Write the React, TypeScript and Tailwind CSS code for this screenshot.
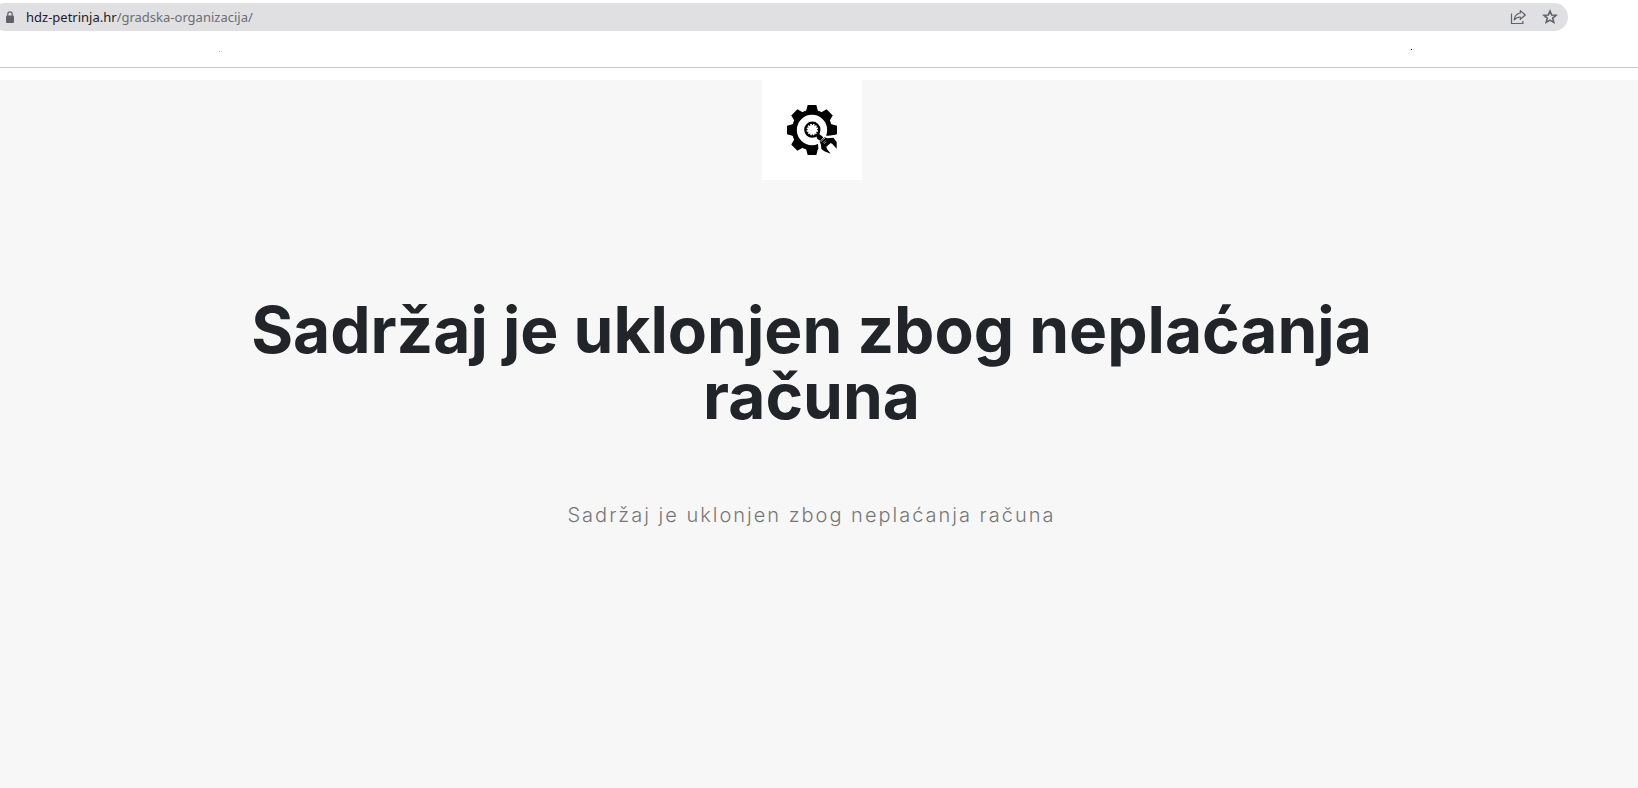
import React from 'react';

const LockIcon: React.FC = () => (
  <svg viewBox="0 0 10 13" className="h-[13px] w-[10px] shrink-0" aria-hidden="true">
    <rect x="1" y="4.5" width="8" height="7.5" rx="1" fill="#5f6368" />
    <path d="M2.8 5V3a2.2 2.2 0 0 1 4.4 0v2" fill="none" stroke="#5f6368" strokeWidth="1.2" />
  </svg>
);

const ShareIcon: React.FC = () => (
  <svg viewBox="0 0 16 16" className="size-4" fill="none" stroke="#5f6368" strokeWidth="1.2" aria-hidden="true">
    <path d="M1.5 4.5V14.5H12.9V12" />
    <path d="M10.3 1.6L15.3 6L10.3 10.3V8C7.7 8 5.9 8.7 4.2 10.8C4.7 7 6.8 4.5 10.3 4Z" strokeLinejoin="round" />
  </svg>
);

const StarIcon: React.FC = () => (
  <svg viewBox="0 0 16 16" className="size-4" aria-hidden="true">
    <path
      d="M8 2L9.7 6L14 6.3L10.7 9.1L11.8 13.4L8 11.1L4.2 13.4L5.3 9.1L2 6.3L6.3 6Z"
      fill="none"
      stroke="#5f6368"
      strokeWidth="1.6"
    />
  </svg>
);

const teeth = [0, 45, 90, 135, 180, 225, 270, 315];
const notches = [0, 30, 60, 90, 120, 150, 180, 210, 240, 270, 300, 330];

const GearLogo: React.FC = () => (
  <svg viewBox="0 0 150 150" className="size-[50px]" role="img" aria-label="Maintenance">
    <circle cx="75" cy="75" r="53" fill="none" stroke="#000" strokeWidth="15" />
    {teeth.map(angle => (
      <path key={angle} d="M62 0H88L93 19L98 24H52L57 19Z" transform={`rotate(${angle} 75 75)`} />
    ))}
    {/* Clear the lower right corner for the wrench */}
    <path d="M91 102L104 91L123 92L150 89V150H96L93 118Z" fill="#fff" />
    {/* Magnifying glass */}
    <circle cx="76" cy="74" r="21" fill="none" stroke="#000" strokeWidth="7" />
    {notches.map(angle => (
      <path key={angle} d="M76 54V60" stroke="#000" strokeWidth="3" transform={`rotate(${angle} 76 74)`} />
    ))}
    <path d="M88 94L96 86L109 97L100 107L91 102Z" />
    {/* Wrench */}
    <path d="M98 109L113 97L122 100L139 98L149 111V131L136 117L131 114L118 125L120 132L131 146L112 139L103 132L102 120Z" />
    <path d="M100 111L115 98" stroke="#fff" strokeWidth="2" />
    <path d="M108 113L115 107M111 116L118 110" stroke="#fff" strokeWidth="1.5" />
  </svg>
);

const BrowserBar: React.FC = () => (
  <header className="border-b border-[#c8c9cb] bg-white pt-[3px]">
    <div className="-ml-2 mr-[70px] flex h-7 items-center rounded-full bg-[#e0e0e2] pl-[13px] pr-2.5">
      <LockIcon />
      <a
        href="#"
        className="ml-[11px] font-['Noto_Sans',sans-serif] text-[13px] leading-5 text-[#6b6e72]"
      >
        <span className="text-[#202124]">hdz-petrinja.hr</span>/gradska-organizacija/
      </a>
      <div className="ml-auto flex items-center gap-4">
        <button type="button" aria-label="Share this page">
          <ShareIcon />
        </button>
        <button type="button" aria-label="Bookmark this page">
          <StarIcon />
        </button>
      </div>
    </div>
    {/* Bookmarks bar */}
    <div className="flex h-9 items-center justify-between pl-[219px] pr-[226px]">
      <span className="mt-1 size-px bg-[#b5a58c]" />
      <span className="size-px bg-[#202124]" />
    </div>
  </header>
);

const App: React.FC = () => {
  return (
    <div className="flex min-h-screen flex-col bg-white">
      <BrowserBar />
      <main className="mt-3 flex grow flex-col items-center bg-[#f7f7f7] pr-[15px] font-[Inter,sans-serif]">
        <div className="flex size-[100px] items-center justify-center bg-white">
          <GearLogo />
        </div>
        <div className="w-full max-w-[1140px] pt-[117px] text-center">
          <h1 className="text-[64px] font-bold leading-[66px] text-[#212529]">
            Sadržaj je uklonjen zbog neplaćanja računa
          </h1>
          <p className="mt-[70px] text-[20px] font-light leading-8 tracking-[2px] text-[#777777]">
            Sadržaj je uklonjen zbog neplaćanja računa
          </p>
        </div>
      </main>
    </div>
  );
};

export default App;
